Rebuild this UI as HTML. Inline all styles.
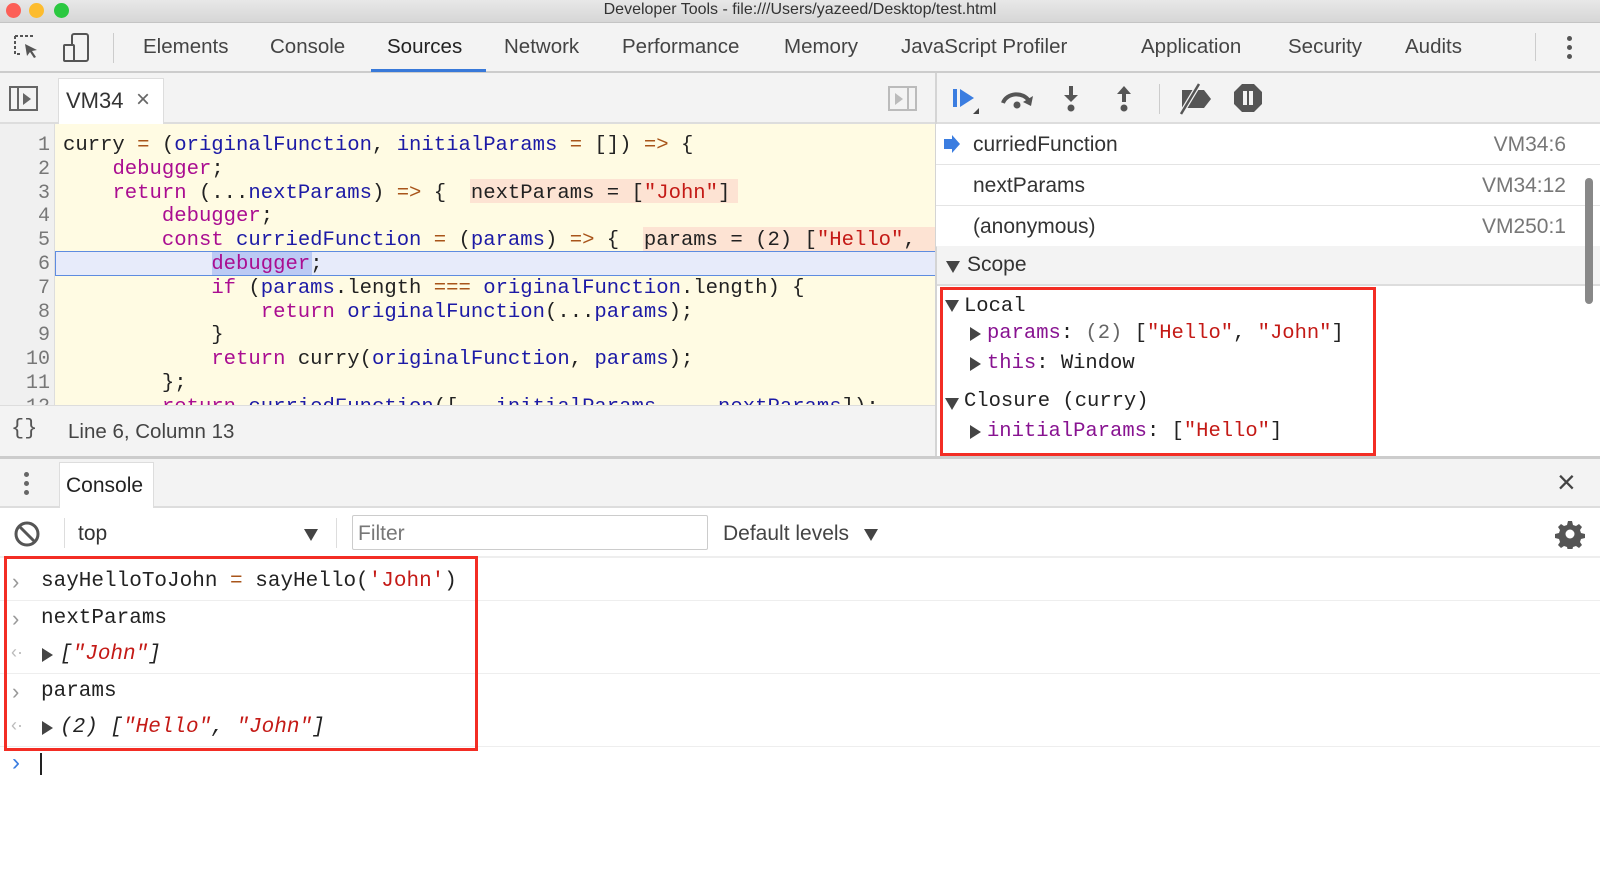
<!DOCTYPE html>
<html><head><meta charset="utf-8"><style>
*{box-sizing:border-box;margin:0;padding:0}
body{width:1600px;height:881px;overflow:hidden;background:#fff;font-family:"Liberation Sans",sans-serif;position:relative;color:#333}
.a{position:absolute}
.mono{font-family:"Liberation Mono",monospace;white-space:pre}
.k{color:#aa0d91}.v{color:#1c1aa6}.o{color:#a8541a}.s{color:#c41a16}.p{color:#881391}
.cl{position:absolute;left:63px;font-size:20.6px;line-height:24px;color:#222}
.ln{position:absolute;right:0;width:50px;text-align:right;font-size:20px;color:#777;font-family:"Liberation Mono",monospace}
.tab{position:absolute;top:35px;font-size:20.5px;color:#444}
.cs{position:absolute;left:936px;width:664px;height:41px;border-bottom:1px solid #e4e4e4;background:#fff;font-size:21px}
.cs span{position:absolute;top:9px}
.cs .r{right:34px;color:#777}
.cr{position:absolute;left:0;width:1600px;height:37px;border-bottom:1px solid #eee}
.cr .m{position:absolute;left:41px;top:6px;font-size:21px;color:#222}
.tri{display:inline-block;width:0;height:0;border-top:7px solid transparent;border-bottom:7px solid transparent;border-left:11px solid #444}
.trd{display:inline-block;width:0;height:0;border-left:7px solid transparent;border-right:7px solid transparent;border-top:12px solid #444}
</style></head><body>
<div class="a" style="left:0;top:0;width:1600px;height:23px;background:linear-gradient(#e8e8e8,#d6d6d6);border-bottom:1px solid #c4c4c4"></div>
<div class="a" style="left:6px;top:3px;width:15px;height:15px;border-radius:50%;background:#fc5f57"></div>
<div class="a" style="left:29px;top:3px;width:15px;height:15px;border-radius:50%;background:#fdbc2e"></div>
<div class="a" style="left:54px;top:3px;width:15px;height:15px;border-radius:50%;background:#2bc840"></div>
<div class="a" style="left:0;top:1px;width:1600px;text-align:center;font-size:16px;color:#333">Developer Tools - file:///Users/yazeed/Desktop/test.html</div>
<div class="a" style="left:0;top:23px;width:1600px;height:50px;background:#f3f3f3;border-bottom:2px solid #ccc"></div>
<svg class="a" style="left:12px;top:33px" width="30" height="30" viewBox="0 0 30 30"><path d="M3 3h18M3 3v18h6" fill="none" stroke="#555" stroke-width="2" stroke-dasharray="3 2"/><path d="M13 11l12 6-5 1 4 6-2 1-4-6-3 4z" fill="#555"/></svg>
<svg class="a" style="left:62px;top:32px" width="30" height="32" viewBox="0 0 30 32"><rect x="10" y="2" width="16" height="27" rx="2" fill="none" stroke="#555" stroke-width="2"/><rect x="2" y="13" width="10" height="16" rx="1" fill="#f3f3f3" stroke="#555" stroke-width="2"/></svg>
<div class="a" style="left:113px;top:33px;width:1px;height:30px;background:#ccc"></div>
<div class="tab" style="left:143px">Elements</div>
<div class="tab" style="left:270px">Console</div>
<div class="tab" style="left:387px;color:#222">Sources</div>
<div class="a" style="left:371px;top:69px;width:115px;height:3px;background:#3879d9"></div>
<div class="tab" style="left:504px">Network</div>
<div class="tab" style="left:622px">Performance</div>
<div class="tab" style="left:784px">Memory</div>
<div class="tab" style="left:901px">JavaScript Profiler</div>
<div class="tab" style="left:1141px">Application</div>
<div class="tab" style="left:1288px">Security</div>
<div class="tab" style="left:1405px">Audits</div>
<div class="a" style="left:1535px;top:33px;width:1px;height:28px;background:#ccc"></div>
<div class="a" style="left:1567px;top:36px;width:5px;height:5px;border-radius:50%;background:#555;box-shadow:0 9px 0 #555,0 18px 0 #555"></div>
<div class="a" style="left:0;top:73px;width:936px;height:51px;background:#f3f3f3;border-bottom:2px solid #ddd"></div>
<svg class="a" style="left:9px;top:86px" width="30" height="26"><rect x="1" y="1" width="27" height="23" fill="none" stroke="#666" stroke-width="2"/><line x1="9" y1="1" x2="9" y2="24" stroke="#666" stroke-width="2"/><path d="M14 7l8 6-8 6z" fill="#666"/></svg>
<div class="a" style="left:58px;top:78px;width:106px;height:46px;background:#fff;border:1px solid #ddd;border-bottom:none"></div>
<div class="a" style="left:66px;top:88px;font-size:22px;color:#333">VM34</div>
<div class="a" style="left:136px;top:86px;font-size:24px;color:#666">×</div>
<svg class="a" style="left:888px;top:86px" width="30" height="26"><rect x="1" y="1" width="27" height="23" fill="none" stroke="#bbb" stroke-width="2"/><line x1="20" y1="1" x2="20" y2="24" stroke="#bbb" stroke-width="2"/><path d="M7 7l8 6-8 6z" fill="#bbb"/></svg>
<div class="a" style="left:0;top:124px;width:55px;height:281px;background:#f0f0f0;border-right:1px solid #ddd"></div>
<div class="a" style="left:55px;top:124px;width:881px;height:281px;background:#fffbe3"></div>
<div class="a" style="left:55px;top:251px;width:881px;height:25px;background:#e7ebfa;border-top:1.5px solid #5e8ce0;border-bottom:1.5px solid #5e8ce0;border-left:1.5px solid #5e8ce0"></div>
<div class="a" style="left:470px;top:179px;width:268px;height:24px;background:#fde3d3"></div>
<div class="a" style="left:643px;top:227px;width:293px;height:24px;background:#fde3d3"></div>
<div class="a" style="left:212px;top:252px;width:100px;height:23px;background:#bccaf4"></div>
<div class="a" style="left:0;top:124px;width:936px;height:281px;overflow:hidden">
<div class="ln" style="left:0;top:10px;line-height:23.8px">1<br>2<br>3<br>4<br>5<br>6<br>7<br>8<br>9<br>10<br>11<br>12</div>
<div class="cl mono" style="top:10px;line-height:23.8px">curry <span class="o">=</span> (<span class="v">originalFunction</span>, <span class="v">initialParams</span> <span class="o">=</span> []) <span class="o">=&gt;</span> {
    <span class="k">debugger</span>;
    <span class="k">return</span> (...<span class="v">nextParams</span>) <span class="o">=&gt;</span> {  nextParams = [<span class="s">"John"</span>]
        <span class="k">debugger</span>;
        <span class="k">const</span> <span class="v">curriedFunction</span> <span class="o">=</span> (<span class="v">params</span>) <span class="o">=&gt;</span> {  params = (2) [<span class="s">"Hello"</span>,
            <span class="k">debugger</span>;
            <span class="k">if</span> (<span class="v">params</span>.length <span class="o">===</span> <span class="v">originalFunction</span>.length) {
                <span class="k">return</span> <span class="v">originalFunction</span>(...<span class="v">params</span>);
            }
            <span class="k">return</span> curry(<span class="v">originalFunction</span>, <span class="v">params</span>);
        };
        <span class="k">return</span> <span class="v">curriedFunction</span>([...<span class="v">initialParams</span>, ...<span class="v">nextParams</span>]);</div>
</div>
<div class="a" style="left:0;top:405px;width:936px;height:51px;background:#f3f3f3;border-top:1px solid #ddd"></div>
<div class="a mono" style="left:11px;top:416px;font-size:22px;color:#555">{}</div>
<div class="a" style="left:68px;top:420px;font-size:20.5px;color:#444">Line 6, Column 13</div>
<div class="a" style="left:935px;top:73px;width:2px;height:385px;background:#d4d4d4"></div>
<div class="a" style="left:937px;top:73px;width:663px;height:51px;background:#f3f3f3;border-bottom:2px solid #ddd"></div>
<svg class="a" style="left:950px;top:84px" width="40" height="34"><rect x="3" y="5" width="4" height="18" fill="#3b7de0"/><path d="M10 5l14 9-14 9z" fill="#3b7de0"/><path d="M23 30h6v-6z" fill="#444"/></svg>
<svg class="a" style="left:1000px;top:86px" width="36" height="26"><path d="M3 17a14 12 0 0 1 26-2" fill="none" stroke="#555" stroke-width="4"/><path d="M33 10l-2 10-8-4z" fill="#555"/><circle cx="17" cy="19" r="3.5" fill="#555"/></svg>
<svg class="a" style="left:1061px;top:84px" width="20" height="30"><rect x="8" y="2" width="4" height="10" fill="#555"/><path d="M3 11h14l-7 7z" fill="#555"/><circle cx="10" cy="24" r="3.5" fill="#555"/></svg>
<svg class="a" style="left:1114px;top:84px" width="20" height="30"><path d="M3 10h14l-7-8z" fill="#555"/><rect x="8" y="9" width="4" height="9" fill="#555"/><circle cx="10" cy="24" r="3.5" fill="#555"/></svg>
<div class="a" style="left:1159px;top:84px;width:1px;height:30px;background:#ccc"></div>
<svg class="a" style="left:1177px;top:82px" width="36" height="34"><path d="M5 8h22l7 9-7 9H5z" fill="#555"/><line x1="4" y1="32" x2="22" y2="2" stroke="#f3f3f3" stroke-width="5"/><line x1="4" y1="32" x2="22" y2="2" stroke="#555" stroke-width="2.5"/></svg>
<svg class="a" style="left:1233px;top:83px" width="30" height="30"><path d="M9 1h12l8 8v12l-8 8H9l-8-8V9z" fill="#555"/><rect x="10" y="8" width="4" height="14" fill="#f3f3f3"/><rect x="16" y="8" width="4" height="14" fill="#f3f3f3"/></svg>
<div class="cs" style="top:124px"><svg class="a" style="left:7px;top:11px" width="18" height="18"><path d="M1 4h8V0l8 9-8 9v-4H1z" fill="#3b7de0"/></svg><span style="left:37px">curriedFunction</span><span class="r">VM34:6</span></div>
<div class="cs" style="top:165px"><span style="left:37px">nextParams</span><span class="r">VM34:12</span></div>
<div class="cs" style="top:206px"><span style="left:37px">(anonymous)</span><span class="r">VM250:1</span></div>
<div class="a" style="left:937px;top:246px;width:663px;height:40px;background:#f3f3f3;border-bottom:2px solid #ddd"></div>
<div class="a" style="left:946px;top:260px"><span class="trd"></span></div>
<div class="a" style="left:967px;top:253px;font-size:21px;color:#333">Scope</div>
<div class="a" style="left:1585px;top:178px;width:8px;height:126px;border-radius:4px;background:#888"></div>
<div class="a mono" style="left:964px;top:292px;font-size:20.5px;line-height:30px;color:#222">Local</div>
<div class="a" style="left:945px;top:299px"><span class="trd"></span></div>
<div class="a" style="left:970px;top:327px"><span class="tri"></span></div>
<div class="a mono" style="left:987px;top:322px;font-size:20.5px;color:#222"><span class="p">params</span>: <span style="color:#666">(2)</span> [<span class="s">"Hello"</span>, <span class="s">"John"</span>]</div>
<div class="a" style="left:970px;top:357px"><span class="tri"></span></div>
<div class="a mono" style="left:987px;top:352px;font-size:20.5px;color:#222"><span class="p">this</span>: Window</div>
<div class="a" style="left:945px;top:397px"><span class="trd"></span></div>
<div class="a mono" style="left:964px;top:390px;font-size:20.5px;color:#222">Closure (curry)</div>
<div class="a" style="left:970px;top:425px"><span class="tri"></span></div>
<div class="a mono" style="left:987px;top:420px;font-size:20.5px;color:#222"><span class="p">initialParams</span>: [<span class="s">"Hello"</span>]</div>
<div class="a" style="left:940px;top:287px;width:436px;height:169px;border:3px solid #f32d24"></div>
<div class="a" style="left:0;top:456px;width:1600px;height:3px;background:#ccc"></div>
<div class="a" style="left:0;top:459px;width:1600px;height:49px;background:#f3f3f3;border-bottom:2px solid #ddd"></div>
<div class="a" style="left:24px;top:472px;width:5px;height:5px;border-radius:50%;background:#666;box-shadow:0 9px 0 #666,0 18px 0 #666"></div>
<div class="a" style="left:59px;top:462px;width:95px;height:46px;background:#fff;border:1px solid #ddd;border-bottom:none"></div>
<div class="a" style="left:66px;top:474px;font-size:21px;color:#222">Console</div>
<div class="a" style="left:1557px;top:466px;font-size:32px;color:#444;line-height:32px">×</div>
<div class="a" style="left:0;top:508px;width:1600px;height:50px;background:#fff;border-bottom:2px solid #eee"></div>
<svg class="a" style="left:13px;top:520px" width="28" height="28"><circle cx="14" cy="14" r="11" fill="none" stroke="#555" stroke-width="3"/><line x1="6" y1="6" x2="22" y2="22" stroke="#555" stroke-width="3"/></svg>
<div class="a" style="left:64px;top:518px;width:1px;height:30px;background:#ddd"></div>
<div class="a" style="left:78px;top:522px;font-size:21px;color:#333">top</div>
<div class="a" style="left:304px;top:528px"><span class="trd"></span></div>
<div class="a" style="left:336px;top:518px;width:1px;height:30px;background:#ddd"></div>
<div class="a" style="left:352px;top:515px;width:356px;height:35px;border:1.5px solid #ccc;border-radius:2px"></div>
<div class="a" style="left:358px;top:522px;font-size:21px;color:#777">Filter</div>
<div class="a" style="left:723px;top:522px;font-size:21px;color:#444">Default levels</div>
<div class="a" style="left:864px;top:528px"><span class="trd"></span></div>
<svg class="a" style="left:1555px;top:519px" width="30" height="30" viewBox="0 0 30 30"><path d="M13 2h4l1 4 3 1 3-2 3 3-2 3 1 3 4 1v4l-4 1-1 3 2 3-3 3-3-2-3 1-1 4h-4l-1-4-3-1-3 2-3-3 2-3-1-3-4-1v-4l4-1 1-3-2-3 3-3 3 2 3-1z" fill="#555"/><circle cx="15" cy="15" r="4.5" fill="#fff"/></svg>
<div class="cr" style="top:564px"><span class="a" style="left:12px;top:5px;color:#999;font-size:22px">›</span><span class="m mono">sayHelloToJohn <span class="o">=</span> sayHello(<span class="s">'John'</span>)</span></div>
<div class="cr" style="top:601px;border:none"><span class="a" style="left:12px;top:5px;color:#999;font-size:22px">›</span><span class="m mono">nextParams</span></div>
<div class="cr" style="top:637px"><span class="a" style="left:11px;top:5px;color:#bbb;font-size:18px">‹·</span><span class="a" style="left:42px;top:11px"><span class="tri"></span></span><span class="m mono" style="left:60px;font-style:italic">[<span class="s">"John"</span>]</span></div>
<div class="cr" style="top:674px;border:none"><span class="a" style="left:12px;top:5px;color:#999;font-size:22px">›</span><span class="m mono">params</span></div>
<div class="cr" style="top:710px"><span class="a" style="left:11px;top:5px;color:#bbb;font-size:18px">‹·</span><span class="a" style="left:42px;top:11px"><span class="tri"></span></span><span class="m mono" style="left:60px;font-style:italic">(2) [<span class="s">"Hello"</span>, <span class="s">"John"</span>]</span></div>
<div class="a" style="left:12px;top:749px;color:#3b7de0;font-size:24px">›</div>
<div class="a" style="left:40px;top:753px;width:2px;height:22px;background:#222"></div>
<div class="a" style="left:4px;top:556px;width:474px;height:195px;border:3px solid #f32d24"></div>
</body></html>
